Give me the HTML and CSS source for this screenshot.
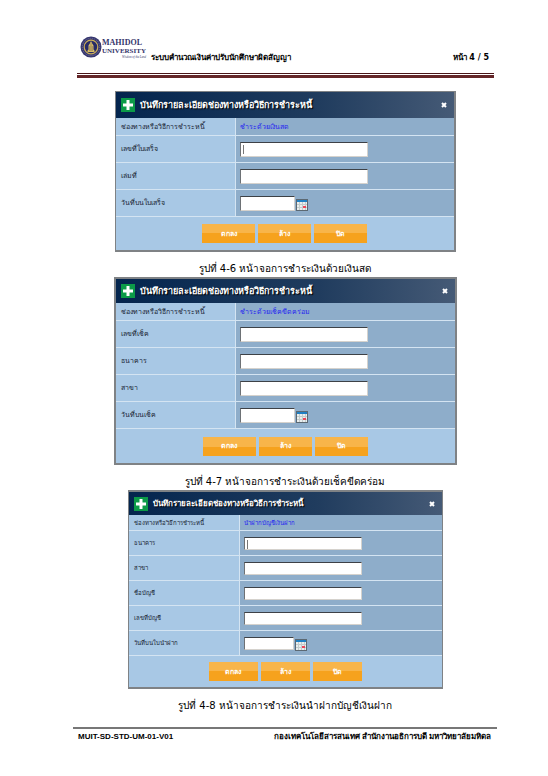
FILE: index.html
```
<!DOCTYPE html>
<html lang="th">
<head>
<meta charset="utf-8">
<meta name="viewport" content="width=device-width, initial-scale=1">
<title>ระบบคำนวณเงินค่าปรับนักศึกษาผิดสัญญา</title>
<link rel="stylesheet" href="styles.css">
</head>
<body>
<svg class="defs" aria-hidden="true">
  <symbol id="plus" viewBox="0 0 14 14"><rect width="14" height="14" fill="#0c9a48"/><path d="M7 2v10M2 7h10" stroke="#fff" stroke-width="3"/></symbol>
  <symbol id="close" viewBox="0 0 6 6"><path d="M1 1l4 4M5 1L1 5" stroke="#fff" stroke-width="2"/></symbol>
  <symbol id="calendar" viewBox="0 0 12 12"><rect x=".5" y=".5" width="11" height="11" fill="#e9eeee" stroke="#5c6973"/><path d="M1 1h10v2H1z" fill="#1f80c4"/><path d="M1 5.5h10M1 8.5h10M3.500 3v8M6.500 3v8M9.500 3v8" stroke="#c3cccc"/><path d="M7 7h3v2H7z" fill="#ee4658"/></symbol>
</svg>
<header class="page-header">
  <div class="brand">
    <svg class="seal" viewBox="0 0 22 22" aria-hidden="true">
      <circle cx="11" cy="11" r="10.500" fill="#35366f"/><circle cx="11" cy="11" r="8.700" fill="none" stroke="#77749a" stroke-width="1" stroke-dasharray="1 1"/>
      <circle cx="11" cy="11" r="6.800" fill="#272b67" stroke="#c9ad58" stroke-width="1.200"/>
      <path d="M11 5l1.200 2.500 1.300 2v4l1 1v1.500h-7v-1.500l1-1v-4l1.300-2z" fill="#d8bd68"/><path d="M11 7v8M9.700 10v5M12.300 10v5" stroke="#6b5b50" stroke-width=".5"/>
    </svg>
    <div class="brand-name"><span>MAHIDOL</span><span class="brand-second">UNIVERSITY</span><small>Wisdom of the Land</small></div>
  </div>
  <h1>ระบบคำนวณเงินค่าปรับนักศึกษาผิดสัญญา</h1>
  <span class="page-number">หน้า 4 / 5</span>
</header>

<main>
  <figure>
    <form class="dialog cash">
      <div class="title"><svg class="plus" aria-hidden="true"><use href="#plus"/></svg><h2>บันทึกรายละเอียดช่องทางหรือวิธีการชำระหนี้</h2><button class="close" type="button" aria-label="ปิดหน้าต่าง"><svg><use href="#close"/></svg></button></div>
      <div class="row method"><span class="name">ช่องทางหรือวิธีการชำระหนี้</span><span class="value">ชำระด้วยเงินสด</span></div>
      <div class="row"><label class="name" for="a1">เลขที่ใบเสร็จ</label><div class="value caret"><input id="a1" type="text"></div></div>
      <div class="row"><label class="name" for="a2">เล่มที่</label><div class="value"><input id="a2" type="text"></div></div>
      <div class="row"><label class="name" for="a3">วันที่บนใบเสร็จ</label><div class="value"><input class="date" id="a3" type="text"><button class="calendar" type="button" aria-label="เลือกวันที่"><svg><use href="#calendar"/></svg></button></div></div>
      <div class="actions"><button type="button">ตกลง</button><button type="button">ล้าง</button><button type="button">ปิด</button></div>
    </form>
    <figcaption>รูปที่ 4-6 หน้าจอการชำระเงินด้วยเงินสด</figcaption>
  </figure>

  <figure>
    <form class="dialog cheque">
      <div class="title"><svg class="plus" aria-hidden="true"><use href="#plus"/></svg><h2>บันทึกรายละเอียดช่องทางหรือวิธีการชำระหนี้</h2><button class="close" type="button" aria-label="ปิดหน้าต่าง"><svg><use href="#close"/></svg></button></div>
      <div class="row method"><span class="name">ช่องทางหรือวิธีการชำระหนี้</span><span class="value">ชำระด้วยเช็คขีดคร่อม</span></div>
      <div class="row"><label class="name" for="b1">เลขที่เช็ค</label><div class="value"><input id="b1" type="text"></div></div>
      <div class="row"><label class="name" for="b2">ธนาคาร</label><div class="value"><input id="b2" type="text"></div></div>
      <div class="row"><label class="name" for="b3">สาขา</label><div class="value"><input id="b3" type="text"></div></div>
      <div class="row"><label class="name" for="b4">วันที่บนเช็ค</label><div class="value"><input class="date" id="b4" type="text"><button class="calendar" type="button" aria-label="เลือกวันที่"><svg><use href="#calendar"/></svg></button></div></div>
      <div class="actions"><button type="button">ตกลง</button><button type="button">ล้าง</button><button type="button">ปิด</button></div>
    </form>
    <figcaption>รูปที่ 4-7 หน้าจอการชำระเงินด้วยเช็คขีดคร่อม</figcaption>
  </figure>

  <figure>
    <form class="dialog deposit">
      <div class="title"><svg class="plus" aria-hidden="true"><use href="#plus"/></svg><h2>บันทึกรายละเอียดช่องทางหรือวิธีการชำระหนี้</h2><button class="close" type="button" aria-label="ปิดหน้าต่าง"><svg><use href="#close"/></svg></button></div>
      <div class="row method"><span class="name">ช่องทางหรือวิธีการชำระหนี้</span><span class="value">นำฝากบัญชีเงินฝาก</span></div>
      <div class="row"><label class="name" for="c1">ธนาคาร</label><div class="value caret"><input id="c1" type="text"></div></div>
      <div class="row"><label class="name" for="c2">สาขา</label><div class="value"><input id="c2" type="text"></div></div>
      <div class="row"><label class="name" for="c3">ชื่อบัญชี</label><div class="value"><input id="c3" type="text"></div></div>
      <div class="row"><label class="name" for="c4">เลขที่บัญชี</label><div class="value"><input id="c4" type="text"></div></div>
      <div class="row"><label class="name" for="c5">วันที่บนใบนำฝาก</label><div class="value"><input class="date" id="c5" type="text"><button class="calendar" type="button" aria-label="เลือกวันที่"><svg><use href="#calendar"/></svg></button></div></div>
      <div class="actions"><button type="button">ตกลง</button><button type="button">ล้าง</button><button type="button">ปิด</button></div>
    </form>
    <figcaption>รูปที่ 4-8 หน้าจอการชำระเงินนำฝากบัญชีเงินฝาก</figcaption>
  </figure>
</main>

<footer><span>MUIT-SD-STD-UM-01-V01</span><span>กองเทคโนโลยีสารสนเทศ สำนักงานอธิการบดี มหาวิทยาลัยมหิดล</span></footer>
</body>
</html>
```
FILE: styles.css
```
* { box-sizing: border-box; }
body {
  margin: 0;
  padding: 36px 51px 0 73px;
  background: #fff;
  color: #000;
  font-family: "Liberation Sans", sans-serif;
}
button, input { font: inherit; margin: 0; padding: 0; border: 0; }
.defs { display: none; }

.page-header {
  display: flex;
  align-items: flex-start;
  height: 42px;
  margin: 0 3px 0 4px;
  padding-left: 3px;
  background: linear-gradient(#4a1518 0 1px, #fff 1px 2px, #642628 2px 5px) bottom / 100% 5px no-repeat;
  white-space: nowrap;
}
.brand { display: flex; width: 71px; }
.seal { width: 22px; height: 22px; flex: none; }
.brand-name {
  display: flex;
  flex-direction: column;
  padding-top: 3px;
  color: #35356b;
  font: bold 8px/8px "Liberation Serif", serif;
}
.brand-name .brand-second { font-size: 7px; }
.brand-name small { font: italic 3px/4px "Liberation Serif", serif; text-align: right; }
.page-header h1 { margin: 0; font-size: 8px; line-height: 12px; padding-top: 16px; }
.page-number { margin-left: auto; padding: 16px 5px 0 0; font: bold 8px/12px "DejaVu Sans", sans-serif; }

main { padding-top: 13px; }
figure { margin: 0; display: flex; flex-direction: column; align-items: center; }
figcaption { font: 10px/16px "DejaVu Sans", sans-serif; padding-top: 9px; white-space: nowrap; }

.dialog {
  --label: 119px;
  --field: 128px;
  --date: 55px;
  --input: 15px;
  --row: 27px;
  --top: 18px;
  --title: 26px;
  --button: 53px;
  --foot: 33px;
  width: 100%;
  max-width: 341px;
  border: 2px solid #7f8285;
  border-width: 1px 2px 2px 1px;
  background: #a8c8e5;
  font-size: 7px;
  line-height: 12px;
  white-space: nowrap;
}
.cheque { --title: 24px; --foot: 34px; max-width: 343px; border-width: 2px; }
.deposit {
  --label: 110px;
  --field: 118px;
  --date: 50px;
  --input: 13px;
  --row: 25px;
  --top: 16px;
  --title: 23px;
  --button: 49px;
  --foot: 31px;
  max-width: 315px;
  border-width: 2px 1px;
  font-size: 6px;
}

.title {
  display: flex;
  align-items: center;
  height: var(--title);
  padding: 0 7px 0 5px;
  background: linear-gradient(90deg, #04254e, #203c5e 60%, #455a76);
}
.plus { width: 14px; height: 14px; flex: none; }
.title h2 { margin: 0 0 0 5px; color: #fff; font-size: 9px; line-height: 16px; text-shadow: 1px 1px 1px #000; }
.deposit h2 { font-size: 8px; }
.close { display: flex; margin-left: auto; background: none; }
.close svg { width: 6px; height: 6px; }

.row { display: flex; height: var(--row); }
.row.method { height: var(--top); }
.name, .value { display: flex; align-items: center; border-bottom: 1px solid #d4e4f2; }
.name { width: calc(var(--label) + 1px); flex: none; padding-left: 5px; color: #172331; border-right: 1px solid #d4e4f2; }
.value { flex: 1; padding-left: 4px; background: #8eadca; }
.method .value { color: #2424f0; }
.value input {
  width: var(--field);
  height: var(--input);
  background: #fff;
  border: 1px solid #d5d2cd;
  border-top: 1px solid #3d4146;
  border-left: 1px solid #6d7175;
}
.value .date { width: var(--date); }
.caret input { background: linear-gradient(#777, #777) 2px 2px / 1px 9px no-repeat #fff; }
.calendar { display: flex; background: none; margin: 3px 0 0 1px; }
.calendar svg { width: 12px; height: 12px; }

.actions { display: flex; justify-content: center; align-items: center; gap: 3px; height: var(--foot); }
.actions button {
  width: var(--button);
  height: 19px;
  color: #fff;
  font-size: 7px;
  font-weight: bold;
  background: linear-gradient(#f8b54a 0 50%, #f6a21d 50%);
}

footer {
  display: flex;
  justify-content: space-between;
  margin-top: 13px;
  padding: 2px 6px 0 5px;
  border-top: 2px solid #777;
  font-size: 8px;
  line-height: 12px;
  font-weight: bold;
  white-space: nowrap;
}
```
